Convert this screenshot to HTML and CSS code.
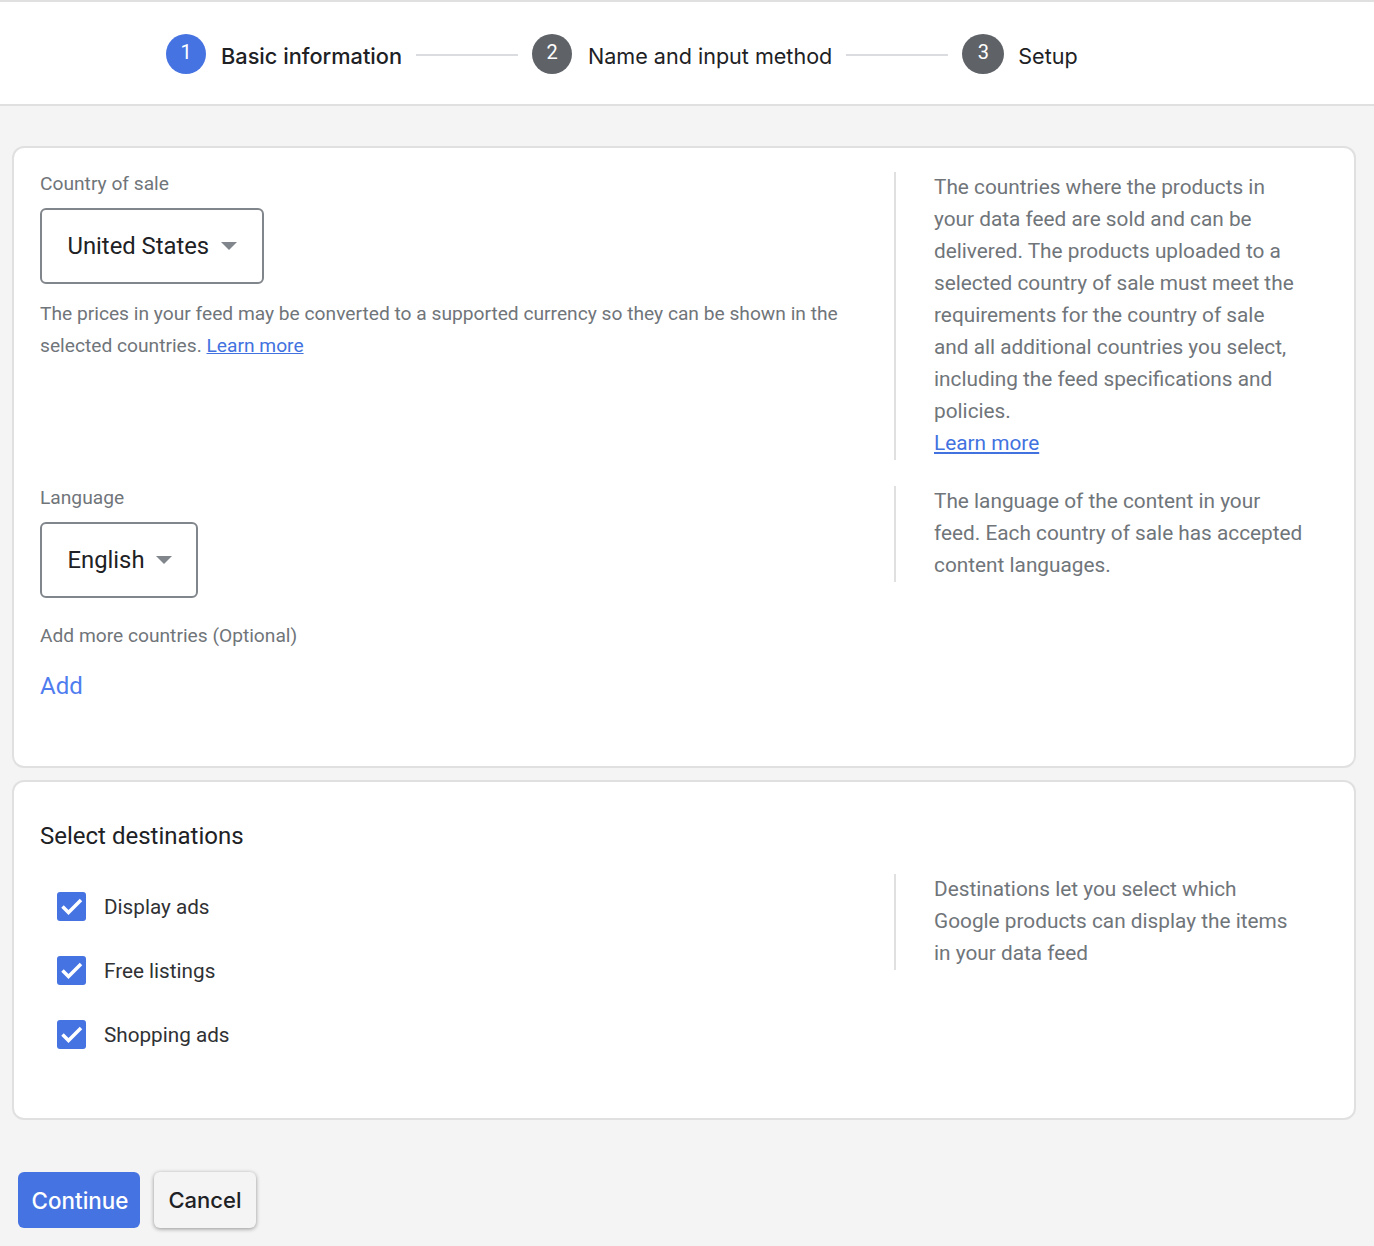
FILE: index.html
```html
<!DOCTYPE html>
<html lang="en">
<head>
  <meta charset="UTF-8" />
  <title>Create feed</title>
  <link rel="stylesheet" href="styles.css">
</head>
<body>

  <!-- STEPPER -->
  <header class="stepper">
    <div class="step step-active">
      <span class="step-num">1</span>
      <span class="step-label">Basic information</span>
    </div>
    <span class="step-line"></span>
    <div class="step">
      <span class="step-num">2</span>
      <span class="step-label">Name and input method</span>
    </div>
    <span class="step-line"></span>
    <div class="step step-last">
      <span class="step-num">3</span>
      <span class="step-label">Setup</span>
    </div>
  </header>

  <main class="content">

    <!-- COUNTRY AND LANGUAGE -->
    <section class="card card-basic">
      <div class="row row-country">
        <div class="field">
          <div class="field-label">Country of sale</div>
          <div class="select select-country">
            <span>United States</span>
            <span class="caret"></span>
          </div>
          <p class="note">The prices in your feed may be converted to a supported currency so they can be shown in the selected countries. <a href="#">Learn more</a></p>
        </div>
        <aside class="help">
          <p class="help-text">The countries where the products in your data feed are sold and can be delivered. The products uploaded to a selected country of sale must meet the requirements for the country of sale and all additional countries you select, including the feed specifications and policies.<br>
          <a href="#">Learn more</a></p>
        </aside>
      </div>

      <div class="row">
        <div class="field">
          <div class="field-label">Language</div>
          <div class="select select-language">
            <span>English</span>
            <span class="caret"></span>
          </div>
          <div class="field-label more-label">Add more countries (Optional)</div>
          <a href="#" class="add-link">Add</a>
        </div>
        <aside class="help">
          <p class="help-text">The language of the content in your feed. Each country of sale has accepted content languages.</p>
        </aside>
      </div>
    </section>

    <!-- DESTINATIONS -->
    <section class="card card-dest">
      <h2 class="card-title">Select destinations</h2>
      <div class="row">
        <div class="checks">
          <label class="check">
            <span class="box"><svg viewBox="0 0 29 29" width="29" height="29"><path d="M5.5 14.5l6 6L24 8" fill="none" stroke="#fff" stroke-width="3.5"/></svg></span>
            Display ads
          </label>
          <label class="check">
            <span class="box"><svg viewBox="0 0 29 29" width="29" height="29"><path d="M5.5 14.5l6 6L24 8" fill="none" stroke="#fff" stroke-width="3.5"/></svg></span>
            Free listings
          </label>
          <label class="check">
            <span class="box"><svg viewBox="0 0 29 29" width="29" height="29"><path d="M5.5 14.5l6 6L24 8" fill="none" stroke="#fff" stroke-width="3.5"/></svg></span>
            Shopping ads
          </label>
        </div>
        <aside class="help">
          <p class="help-text">Destinations let you select which Google products can display the items in your data feed</p>
        </aside>
      </div>
    </section>

    <!-- ACTIONS -->
    <div class="actions">
      <button type="button" class="btn btn-primary">Continue</button>
      <button type="button" class="btn btn-cancel">Cancel</button>
    </div>

  </main>

</body>
</html>
```

FILE: styles.css
```css
/* RESET */
* {
  margin: 0;
  padding: 0;
  box-sizing: border-box;
}

html, body {
  width: 100%;
  height: 1246px;
  overflow: hidden;
}

body {
  background: #f4f4f4;
  font-family: Roboto, 'Liberation Sans', sans-serif;
  font-size: 19.2px;
  color: #202124;
}

a {
  color: #4272e0;
}

/* STEPPER */
.stepper {
  height: 106px;
  padding: 32px 0 0 166px;
  display: flex;
  align-items: flex-start;
  background: #fff;
  border-top: 2px solid #e0e0e0;
  border-bottom: 2px solid #e0e0e0;
}

.step {
  display: flex;
  align-items: flex-start;
}

.step-num {
  width: 40px;
  height: 40px;
  border-radius: 50%;
  background: #5f6368;
  color: #fff;
  font-size: 20px;
  line-height: 37px;
  text-align: center;
}

.step-last .step-num {
  width: 42px;
}

.step-active .step-num {
  background: #4673e2;
}

.step-label {
  margin-left: 16px;
  font-family: Inter, Roboto, sans-serif;
  font-size: 21.55px;
  line-height: 44px;
  color: #202124;
}

.step-active .step-label {
  margin-left: 15px;
  font-size: 21.75px;
  font-weight: 500;
}

.step-last .step-label {
  margin-left: 14px;
}

.step-line {
  width: 102px;
  height: 2px;
  margin: 20px 14px 0;
  background: #dadce0;
}

/* CARDS */
.content {
  padding: 40px 18px 0 12px;
}

.card {
  background: #fff;
  border: 2px solid #e0e0e0;
  border-radius: 12px;
  padding: 0 26px;
}

.card-basic {
  height: 622px;
  padding-top: 24px;
}

.card-dest {
  height: 340px;
  margin-top: 12px;
  padding-top: 38px;
}

.card-title {
  font-size: 24px;
  font-weight: 400;
  line-height: 32px;
  color: #202124;
}

.row {
  display: grid;
  grid-template-columns: 854px 1fr;
  align-items: start;
}

.row-country {
  margin-bottom: 26px;
}

.card-dest .row {
  margin-top: 22px;
}

/* LEFT COLUMN */
.field-label {
  color: #70757a;
  line-height: 23px;
}

.select {
  display: flex;
  align-items: center;
  height: 76px;
  margin-top: 13px;
  padding-left: 25.5px;
  background: #fff;
  border: 2px solid #80868b;
  border-radius: 6px;
  font-size: 23.8px;
  color: #202124;
}

.select-country {
  width: 224px;
}

.select-language {
  width: 158px;
}

.caret {
  width: 0;
  height: 0;
  margin-left: 11.5px;
  border-left: 8px solid transparent;
  border-right: 8px solid transparent;
  border-top: 8px solid #80868b;
}

.note {
  width: 810px;
  margin-top: 14px;
  color: #70757a;
  line-height: 32px;
}

.more-label {
  margin-top: 26px;
}

.add-link {
  display: block;
  margin-top: 25px;
  font-size: 24px;
  line-height: 28px;
  color: #4f7df0;
  text-decoration: none;
}

/* RIGHT COLUMN */
.help {
  display: flow-root;
  width: 410px;
  padding-left: 38px;
  padding-bottom: 1px;
  border-left: 2px solid #e0e0e0;
  font-size: 20.8px;
  color: #70757a;
  line-height: 32px;
}

.help-text {
  margin-top: -1px;
}

/* CHECKBOXES */
.checks {
  padding-left: 17px;
  padding-top: 18px;
}

.check {
  display: flex;
  align-items: center;
  height: 29px;
  margin-bottom: 35px;
  font-size: 20.7px;
  color: #303134;
}

.box {
  display: block;
  width: 29px;
  height: 29px;
  margin-right: 18px;
  background: #4673e2;
  border-radius: 3px;
}

.box svg {
  display: block;
}

/* BUTTONS */
.actions {
  display: flex;
  gap: 14px;
  margin-top: 52px;
  padding-left: 6px;
}

.btn {
  height: 56px;
  border: none;
  border-radius: 6px;
  font-family: Inter, Roboto, sans-serif;
  font-size: 22px;
  font-weight: 500;
  cursor: pointer;
}

.btn-primary {
  width: 122px;
  padding-left: 2px;
  background: #4673e2;
  color: #fff;
  font-size: 22.4px;
}

.btn-cancel {
  width: 102px;
  background: #f4f4f4;
  color: #202124;
  box-shadow: 0 1px 4px rgba(0, 0, 0, 0.4);
}
```
